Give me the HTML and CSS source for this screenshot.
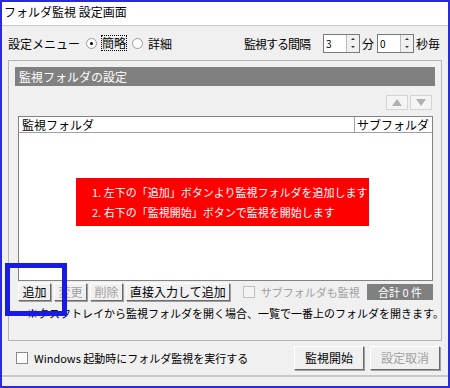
FILE: index.html
```html
<!DOCTYPE html>
<html lang="ja">
<head>
  <meta charset="UTF-8">
  <title>フォルダ監視 設定画面</title>
  <link rel="stylesheet" href="styles.css">
</head>
<body>
  <div class="window">
    <div class="titlebar">フォルダ監視 設定画面</div>

    <div class="menu-row">
      <div class="menu-left">
        <span>設定メニュー</span>
        <label class="radio"><span class="dot checked"></span><span class="focus">簡略</span></label>
        <label class="radio"><span class="dot"></span>詳細</label>
      </div>
      <div class="menu-right">
        <span class="interval-label">監視する間隔</span>
        <span class="spin"><span class="spin-val">3</span><span class="spin-btn"><i class="up"></i><i class="down"></i></span></span>
        <span>分</span>
        <span class="spin"><span class="spin-val">0</span><span class="spin-btn"><i class="up"></i><i class="down"></i></span></span>
        <span>秒毎</span>
      </div>
    </div>

    <div class="group">
      <div class="group-head">監視フォルダの設定</div>
      <div class="order-row">
        <span class="order-btn"><i class="up"></i></span><span class="order-btn"><i class="down"></i></span>
      </div>
      <div class="list">
        <div class="list-head">
          <span class="col-folder">監視フォルダ</span>
          <span class="col-sub">サブフォルダ</span>
        </div>
        <div class="list-body">
          <div class="notice">
            <div>1. 左下の「追加」ボタンより監視フォルダを追加します</div>
            <div>2. 右下の「監視開始」ボタンで監視を開始します</div>
          </div>
        </div>
      </div>
      <div class="action-row">
        <button class="btn small">追加</button>
        <button class="btn small" disabled>変更</button>
        <button class="btn small" disabled>削除</button>
        <button class="btn">直接入力して追加</button>
        <label class="check disabled"><span class="box"></span>サブフォルダも監視</label>
        <span class="total">合計 0 件</span>
      </div>
      <div class="note">※タスクトレイから監視フォルダを開く場合、一覧で一番上のフォルダを開きます。</div>
      <div class="highlight"></div>
    </div>

    <div class="footer-row">
      <label class="check startup"><span class="box"></span>Windows 起動時にフォルダ監視を実行する</label>
      <div class="footer-btns">
        <button class="btn big">監視開始</button>
        <button class="btn big" disabled>設定取消</button>
      </div>
    </div>
  </div>
</body>
</html>
```

FILE: styles.css
```css
body {
  margin: 0;
  font-family: "Noto Sans CJK JP", "DejaVu Sans", sans-serif;
  font-size: 12px;
  color: #000;
}
.window {
  width: 450px;
  height: 388px;
  box-sizing: border-box;
  border: 2px solid #2a2ad8;
  background: #f0f0f0;
  position: relative;
  overflow: hidden;
}
.titlebar {
  height: 23px;
  line-height: 20px;
  padding-left: 2px;
  background: #fff;
  border-bottom: 1px solid #c8c8c8;
}
.menu-row {
  display: flex;
  justify-content: space-between;
  align-items: center;
  height: 34px;
  padding: 0 8px 0 6px;
  white-space: nowrap;
}
.menu-left, .menu-right {
  display: flex;
  align-items: center;
}
.radio {
  display: flex;
  align-items: center;
  margin-left: 6px;
}
.dot {
  width: 9px;
  height: 9px;
  border: 1px solid #9a9a9a;
  border-radius: 50%;
  background: #fff;
  margin-right: 5px;
  position: relative;
}
.dot.checked::after {
  content: "";
  position: absolute;
  left: 3px;
  top: 3px;
  width: 3px;
  height: 3px;
  border-radius: 50%;
  background: #000;
}
.focus {
  outline: 1px dotted #000;
  line-height: 14px;
}
.interval-label {
  margin-right: 10px;
  letter-spacing: -1px;
}
.spin {
  display: flex;
  height: 17px;
  border: 1px solid #7a7a7a;
  background: #fff;
  margin: 0 2px 0 3px;
}
.spin-val {
  width: 20px;
  padding-left: 2px;
  line-height: 17px;
  font-size: 10px;
}
.spin-btn {
  display: flex;
  flex-direction: column;
  justify-content: space-around;
  align-items: center;
  width: 12px;
  border-left: 1px solid #bbb;
  background: #f0f0f0;
}
.up, .down {
  display: block;
  width: 0;
  height: 0;
  border-left: 2px solid transparent;
  border-right: 2px solid transparent;
}
.up {
  border-bottom: 2px solid #333;
}
.down {
  border-top: 2px solid #333;
}
.group {
  position: relative;
  margin: 0 6px;
  height: 273px;
  border: 1px solid #b4b4b4;
  padding: 6px 6px 0;
}
.group-head {
  height: 19px;
  line-height: 19px;
  background: #808080;
  color: #fff;
  padding-left: 4px;
}
.order-row {
  display: flex;
  justify-content: flex-end;
  gap: 2px;
  margin: 9px 3px 6px 0;
}
.order-btn {
  display: flex;
  align-items: center;
  justify-content: center;
  width: 20px;
  height: 13px;
  border: 1px solid #d4d4d4;
  background: #f4f4f4;
}
.order-btn .up {
  border-left-width: 5px;
  border-right-width: 5px;
  border-bottom: 7px solid #b0b0b0;
}
.order-btn .down {
  border-left-width: 5px;
  border-right-width: 5px;
  border-top: 7px solid #b0b0b0;
}
.list {
  margin: 0 2px 0 3px;
  height: 163px;
  border: 1px solid #828282;
  background: #fff;
}
.list-head {
  display: flex;
  height: 15px;
  line-height: 15px;
  border-bottom: 1px solid #a0a0a0;
  background: #fff;
}
.col-folder {
  flex: 1;
  padding-left: 3px;
  border-right: 1px solid #a0a0a0;
}
.col-sub {
  width: 75px;
  padding-left: 2px;
}
.list-body {
  display: flex;
  justify-content: center;
  padding-top: 45px;
}
.notice {
  width: 293px;
  height: 48px;
  box-sizing: border-box;
  padding: 4px 0 0 16px;
  background: #ff0000;
  color: #fff;
  font-size: 11px;
  line-height: 20px;
  margin-left: -6px;
  white-space: nowrap;
}
.action-row {
  display: flex;
  align-items: center;
  margin: 2px 2px 0 3px;
  white-space: nowrap;
}
.btn {
  font-family: inherit;
  font-size: 12px;
  height: 18px;
  padding: 0 3px;
  margin-right: 3px;
  background: #f0f0f0;
  color: #000;
  border: 1px solid;
  border-color: #fff #6a6a6a #6a6a6a #fff;
  box-shadow: 1px 1px 0 #a0a0a0;
  line-height: 14px;
  white-space: nowrap;
}
.btn:disabled {
  color: #a0a0a0;
}
.btn.small {
  width: 33px;
  padding: 0;
}
.btn.big {
  width: 70px;
  height: 24px;
  margin-right: 0;
  margin-left: 6px;
}
.check {
  display: flex;
  align-items: center;
  margin-left: 10px;
  white-space: nowrap;
}
.check.disabled {
  color: #a0a0a0;
  font-size: 11px;
}
.box {
  width: 10px;
  height: 10px;
  border: 1px solid #8a8a8a;
  background: #fff;
  margin-right: 6px;
}
.check.disabled .box {
  border-color: #c0c0c0;
  background: #f4f4f4;
}
.total {
  margin-left: auto;
  width: 66px;
  height: 16px;
  line-height: 16px;
  text-align: center;
  background: #808080;
  color: #fff;
  font-size: 11px;
}
.note {
  margin: 4px 0 0 12px;
  font-size: 11px;
  white-space: nowrap;
}
.highlight {
  position: absolute;
  left: -4px;
  top: 202px;
  width: 52px;
  height: 43px;
  border: 5px solid #1a1ae6;
}
.footer-row {
  display: flex;
  justify-content: space-between;
  align-items: center;
  height: 34px;
  padding: 0 8px 0 14px;
  border-bottom: 2px solid #c8c8c8;
}
.footer-row .check {
  margin-left: 0;
}
.startup {
  font-size: 11px;
}
.footer-btns {
  display: flex;
}
```
